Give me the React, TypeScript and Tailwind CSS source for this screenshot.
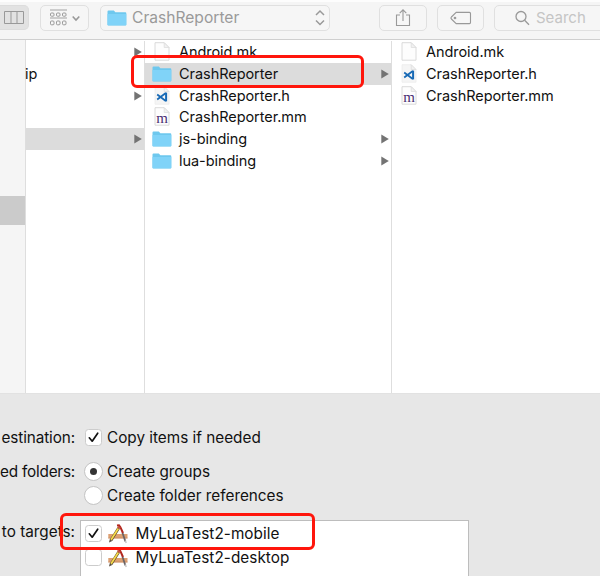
import type { ReactNode } from "react";

const Folder = () => (
  <svg width="20" height="16" viewBox="0 0 20 16" className="shrink-0">
    <path d="M.5 1.6Q.5 .6 1.5 .6H6.8l1.6 1.6h9.9Q19.3 2.2 19.3 3.2V14.7Q19.3 15.5 18.5 15.5H1.3Q.5 15.5 .5 14.7Z" fill="#6ec8ee" />
    <path d="M.5 4H19.3V14.5Q19.3 15.3 18.5 15.3H1.3Q.5 15.3 .5 14.5Z" fill="#80d3f8" />
  </svg>
);

const Doc = ({ kind }: { kind?: "vs" | "m" }) => (
  <span className="relative flex h-5 w-5 shrink-0 justify-center">
    <svg width="16" height="19" viewBox="0 0 16 19">
      <path
        d="M1 .7H10.2L15 5.5V18.2H1Z"
        fill={kind === "vs" ? "#f5f5f5" : "#fdfdfd"}
        stroke={kind === "vs" ? "#eeeeee" : "#d6d6d6"}
        strokeWidth=".9"
      />
      <path d="M10.2 .7V5.5H15Z" fill="#f1f1f1" stroke="#dadada" strokeWidth=".7" />
      {kind === "vs" && (
        <g fill="none" stroke="#1769b5" strokeLinejoin="round">
          <path d="M3.2 8.6L11.8 14.9M3.2 13.4L11.8 7.1" strokeWidth="1.8" />
          <path d="M12.1 6.6V15.4" strokeWidth="2" />
        </g>
      )}
    </svg>
    {kind === "m" && (
      <span className="absolute left-0 top-[3px] w-5 text-center font-['Liberation_Serif',serif] text-[15px] leading-[17px] text-[#4b2d73]">
        m
      </span>
    )}
  </span>
);

const Arrow = () => (
  <svg width="8" height="10" viewBox="0 0 8 10" className="shrink-0">
    <path d="M.3 .6L7.8 5L.3 9.4Z" fill="#737373" />
  </svg>
);

type RowProps = { icon: ReactNode; name: string; arrow?: boolean; selected?: boolean };

const Row = ({ icon, name, arrow, selected }: RowProps) => (
  <div className={`flex h-[21.7px] items-center pl-[7px] pr-[2px] ${selected ? "bg-[#dcdcdc]" : ""}`}>
    {icon}
    <span className="ml-[7px]">{name}</span>
    {arrow && (
      <span className="ml-auto">
        <Arrow />
      </span>
    )}
  </div>
);

const Check = ({ on }: { on?: boolean }) => (
  <span className="flex h-[17px] w-[17px] shrink-0 items-center justify-center rounded-[3.5px] border border-[#cccccc] bg-white">
    {on && (
      <svg width="13" height="13" viewBox="0 0 13 13">
        <path d="M2.3 6.8L5.2 10.2L10.7 2.2" fill="none" stroke="#111" strokeWidth="1.7" strokeLinecap="round" strokeLinejoin="round" />
      </svg>
    )}
  </span>
);

const Radio = ({ on }: { on?: boolean }) => (
  <span className="flex h-[19px] w-[19px] shrink-0 items-center justify-center rounded-full border border-[#c4c4c4] bg-white">
    {on && <span className="h-[7px] w-[7px] rounded-full bg-[#333]" />}
  </span>
);

const AppIcon = () => (
  <svg width="20" height="20" viewBox="0 0 20 20" className="shrink-0">
    <path d="M.3 10H19.5V14.4H.3Z" fill="#dda072" />
    <path d="M.3 14H19.5" stroke="#c4875e" strokeWidth=".7" />
    <path d="M14.4 8.5L17.4 17.5" stroke="#6b6466" strokeWidth="1.8" />
    <path d="M17.2 16.5L18.2 19" stroke="#c4c4c4" strokeWidth="1.4" />
    <path d="M9 1.6L11 1.4L12.4 3.2L15 9" fill="none" stroke="#b3271f" strokeWidth="2" />
    <path d="M10.7 4L3 16.2" stroke="#5d4c2c" strokeWidth="2.9" />
    <path d="M10.3 4.4L3.1 15.8" stroke="#f8db4b" strokeWidth="1.8" />
    <path d="M11.4 2.6L10.4 4.4" stroke="#c6503d" strokeWidth="2.6" />
    <path d="M1.8 15.3L1 18.6L4.2 16.9Z" fill="#54493c" />
  </svg>
);

const button = "flex h-[26px] shrink-0 items-center rounded-[5px] border border-[#e0e0e0] bg-[#f6f6f6]";

export default function App() {
  return (
    <div className="relative flex h-[576px] w-[600px] flex-col overflow-hidden bg-[#e7e7e7] font-['Inter',sans-serif] text-[14.5px] leading-[20px] text-[#111]">
      <header className="flex h-[40px] shrink-0 items-start border-b border-[#cfcfcf] bg-[#f5f5f5] shadow-[inset_0_2px_0_#fdfdfd]">
        <div className="mt-[5px] flex h-[25px] w-[29px] shrink-0 items-center rounded-r-[5px] border border-l-0 border-[#dcdcdc] bg-[#e2e2e2] pl-[4px]">
          <svg width="20" height="13" viewBox="0 0 20 13" fill="none" stroke="#999">
            <path d="M.5 .5H19.5V12.5H.5ZM7 .5V12.5M13 .5V12.5" />
          </svg>
        </div>
        <div className={`${button} ml-[11px] mt-[4.5px] w-[49px] pl-[8px]`}>
          <svg width="36" height="18" viewBox="0 0 36 18" fill="none" stroke="#999">
            <path d="M1 1H18M1 9H18" strokeWidth=".9" />
            <rect x="1.5" y="4" width="3.5" height="3.2" rx="1" />
            <rect x="7.5" y="4" width="3.5" height="3.2" rx="1" />
            <rect x="13.5" y="4" width="3.5" height="3.2" rx="1" />
            <rect x="1.5" y="12" width="3.5" height="3.8" rx="1" />
            <rect x="7.5" y="12" width="3.5" height="3.8" rx="1" />
            <rect x="13.5" y="12" width="3.5" height="3.8" rx="1" />
            <path d="M23.7 7.5L27 11L30.3 7.5" strokeWidth="1.6" />
          </svg>
        </div>
        <div className={`${button} ml-[11px] mt-[4.5px] w-[230px] pl-[6px] pr-[3px]`}>
          <Folder />
          <span className="ml-[5px] pt-px text-[15.6px] text-[#9a9a9a]">CrashReporter</span>
          <svg width="12" height="18" viewBox="0 0 12 18" fill="none" stroke="#999" strokeWidth="1.5" className="ml-auto">
            <path d="M2 6L6 2L10 6M2 11.5L6 15.5L10 11.5" />
          </svg>
        </div>
        <div className={`${button} ml-[49px] mt-[4.5px] w-[48px] justify-center`}>
          <svg width="16" height="20" viewBox="0 0 16 20" fill="none" stroke="#999" strokeWidth="1.1">
            <path d="M5 7H1.5V17.5H14.5V7H11M8 13V2M4.7 5.2L8 1.9L11.3 5.2" />
          </svg>
        </div>
        <div className={`${button} ml-[10px] mt-[4.5px] w-[47px] justify-center`}>
          <svg width="22" height="14" viewBox="0 0 22 14" fill="none" stroke="#999" strokeWidth="1.1">
            <path d="M6.2 1.4H19.5Q20.5 1.4 20.5 2.4V11.6Q20.5 12.6 19.5 12.6H6.2L1.4 8Q.5 7 1.4 6Z" />
            <circle cx="5" cy="7" r=".8" />
          </svg>
        </div>
        <div className={`${button} ml-[10px] mt-[4.5px] w-[120px] pl-[20px]`}>
          <svg width="15" height="16" viewBox="0 0 15 16" fill="none" stroke="#999" strokeWidth="1.3">
            <circle cx="6" cy="6.5" r="5" />
            <path d="M9.6 10.2L14 14.8" />
          </svg>
          <span className="ml-[6px] pt-px text-[15px] text-[#c5c5c5]">Search</span>
        </div>
      </header>

      <main className="flex h-[353.5px] shrink-0 border-b border-[#e2e2e2] bg-white pt-[1.4px] tracking-[-0.05px]">
        <aside className="-mt-[1.4px] w-[26px] shrink-0 border-r border-[#dedede] bg-[#f5f5f5] pt-[155.5px]">
          <div className="h-[29px] bg-[#cbcbcb]" />
        </aside>
        <section className="w-[119px] shrink-0 border-r border-[#dedede]">
          <div className="flex h-[21.7px] items-center justify-end pr-[2px]"><Arrow /></div>
          <div className="-ml-px flex h-[21.7px] items-center">ip</div>
          <div className="flex h-[21.7px] items-center justify-end pr-[2px]"><Arrow /></div>
          <div className="h-[21.7px]" />
          <div className="flex h-[21.7px] items-center justify-end bg-[#dcdcdc] pr-[2px]"><Arrow /></div>
        </section>
        <section className="w-[247px] shrink-0 border-r border-[#dedede]">
          <Row icon={<Doc />} name="Android.mk" />
          <Row icon={<Folder />} name="CrashReporter" arrow selected />
          <Row icon={<Doc kind="vs" />} name="CrashReporter.h" />
          <Row icon={<Doc kind="m" />} name="CrashReporter.mm" />
          <Row icon={<Folder />} name="js-binding" arrow />
          <Row icon={<Folder />} name="lua-binding" arrow />
        </section>
        <section className="flex-1">
          <Row icon={<Doc />} name="Android.mk" />
          <Row icon={<Doc kind="vs" />} name="CrashReporter.h" />
          <Row icon={<Doc kind="m" />} name="CrashReporter.mm" />
        </section>
      </main>

      <footer className="flex shrink-0 flex-col pt-[33.5px] text-[15.3px]">
        <div className="flex h-[20px] items-center">
          <span className="flex w-[75px] shrink-0 justify-end whitespace-nowrap pt-[1.5px] tracking-[-0.1px]">estination:</span>
          <span className="ml-[10px]"><Check on /></span>
          <span className="ml-[5px] pt-[1.5px]">Copy items if needed</span>
        </div>
        <div className="mt-[14px] flex h-[20px] items-center">
          <span className="flex w-[75px] shrink-0 justify-end whitespace-nowrap pt-[1.5px] tracking-[-0.2px]">ed folders:</span>
          <span className="ml-[9px]"><Radio on /></span>
          <span className="ml-[4px] pt-[1.5px]">Create groups</span>
        </div>
        <div className="mt-[4px] flex h-[20px] items-center">
          <span className="ml-[84px]"><Radio /></span>
          <span className="ml-[4px] pt-[1.5px]">Create folder references</span>
        </div>
        <div className="mt-[15px] flex">
          <span className="mt-[2px] flex w-[75px] shrink-0 justify-end whitespace-nowrap">to targets:</span>
          <div className="ml-[5px] h-[70px] w-[389px] border border-[#bdbdbd] bg-white pl-[4px] pt-[0.5px]">
            <div className="flex h-[24.3px] items-center">
              <Check on />
              <span className="ml-[6px]"><AppIcon /></span>
              <span className="ml-[7.5px] pt-px tracking-[0.05px]">MyLuaTest2-mobile</span>
            </div>
            <div className="flex h-[24.3px] items-center">
              <Check />
              <span className="ml-[6px]"><AppIcon /></span>
              <span className="ml-[7.5px] pt-px tracking-[0.05px]">MyLuaTest2-desktop</span>
            </div>
          </div>
        </div>
      </footer>

      <div className="absolute left-[130.5px] top-[55px] h-[32.5px] w-[233px] rounded-[6px] border-[3px] border-[#ff160c]" />
      <div className="absolute left-[59.5px] top-[512.5px] h-[37px] w-[255.5px] rounded-[6px] border-[3px] border-[#ff160c]" />
    </div>
  );
}
